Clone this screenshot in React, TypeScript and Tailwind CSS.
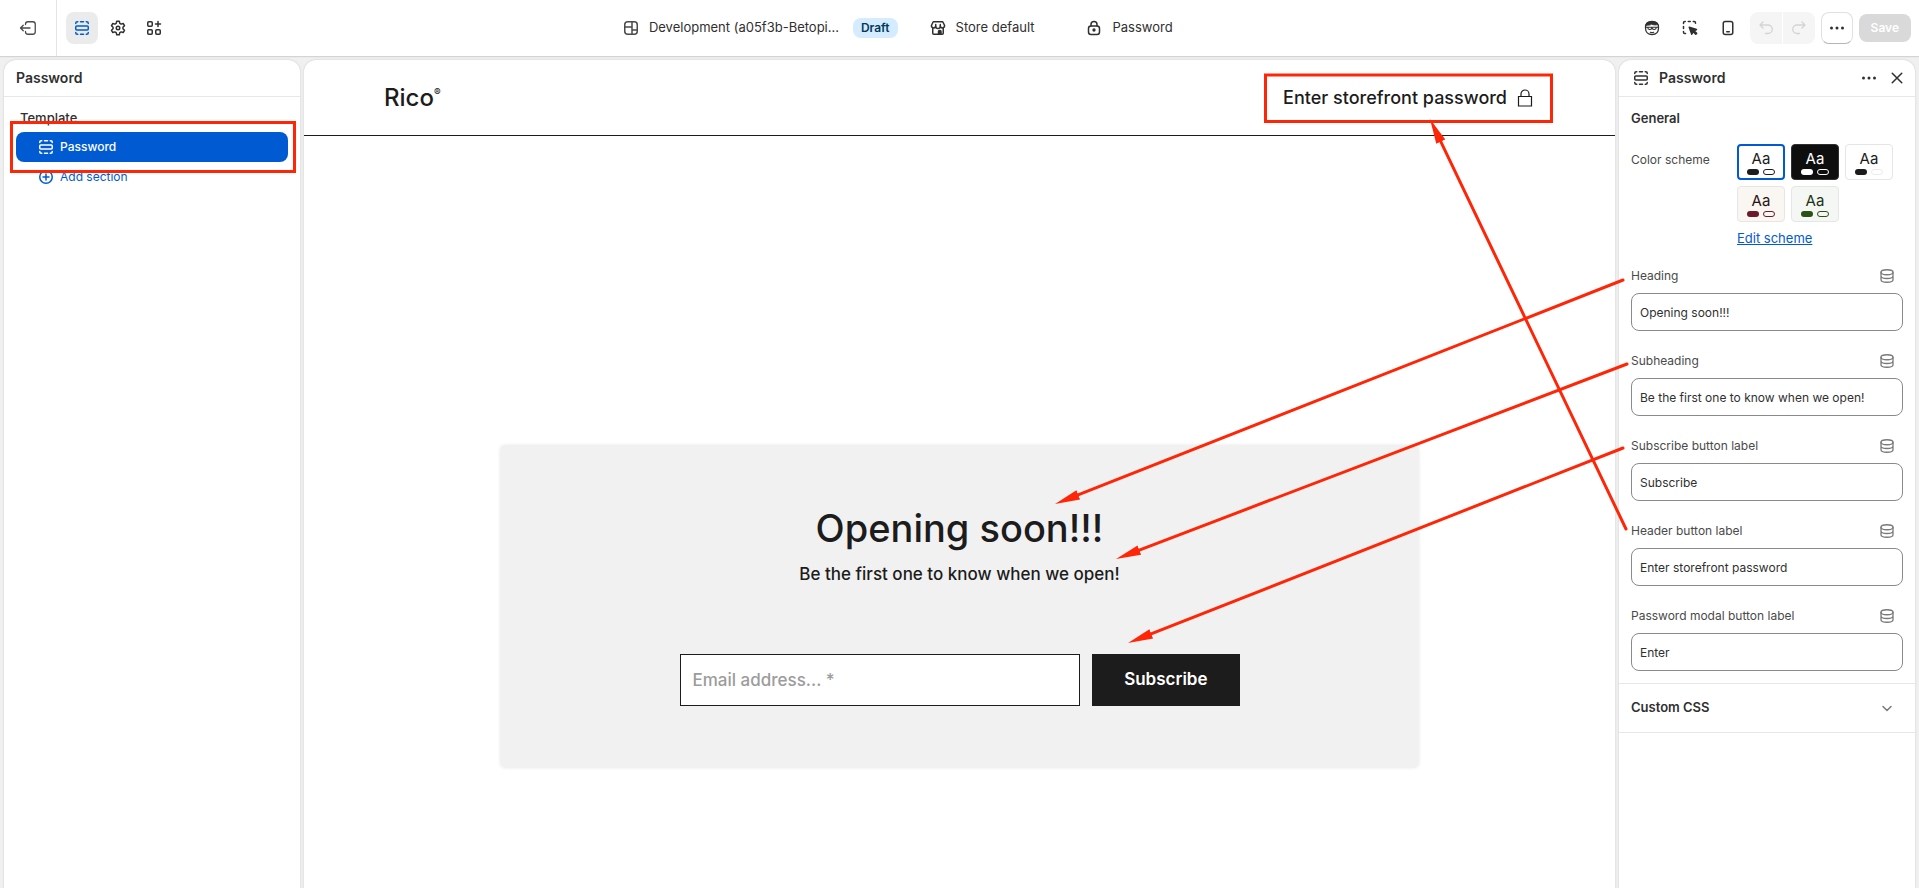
import { useState } from "react";
import type { ReactNode } from "react";

type IconProps = { children: ReactNode; className?: string };

function Icon({ children, className = "" }: IconProps) {
	return (
		<svg
			viewBox="0 0 20 20"
			fill="none"
			stroke="currentColor"
			strokeWidth="1.5"
			strokeLinecap="round"
			strokeLinejoin="round"
			aria-hidden="true"
			className={`size-5 shrink-0 ${className}`}
		>
			{children}
		</svg>
	);
}

const SectionIcon = () => (
	<Icon>
		<rect x="3.75" y="8" width="12.5" height="4" rx="1" />
		<path d="M3.75 5.5v-.25c0-.8.7-1.5 1.5-1.5h.5M8.5 3.75h3M14.25 3.75h.5c.8 0 1.5.7 1.5 1.5v.25M3.75 14.5v.25c0 .8.7 1.5 1.5 1.5h.5M8.5 16.25h3M14.25 16.25h.5c.8 0 1.5-.7 1.5-1.5v-.25" />
	</Icon>
);

const ExitIcon = () => (
	<Icon>
		<path d="M7.5 6.5v-.25a2.5 2.5 0 0 1 2.5-2.5h4.75a2.5 2.5 0 0 1 2.5 2.5v7.5a2.5 2.5 0 0 1-2.5 2.5H10a2.5 2.5 0 0 1-2.5-2.5v-.25M12 10H2.75M5.25 7.25 2.5 10l2.75 2.75" strokeWidth="1.3" />
	</Icon>
);

const GearIcon = () => (
	<Icon>
		<path d="M8.7 3.25h2.6l.5 2.1 1.3.75 2.050-.65 1.350 2.300-1.550 1.500v1.500l1.550 1.500-1.350 2.300-2.050-.65-1.300.75-.5 2.100H8.700l-.5-2.100-1.300-.75-2.050.65-1.350-2.300 1.550-1.500v-1.500L3.500 7.750l1.350-2.300 2.050.65 1.300-.75z" />
		<circle cx="10" cy="10" r="1.75" />
	</Icon>
);

const AppsIcon = () => (
	<Icon>
		<rect x="3.75" y="3.75" width="4.5" height="4.5" rx="1" />
		<rect x="3.75" y="11.75" width="4.5" height="4.5" rx="1" />
		<rect x="11.75" y="11.75" width="4.5" height="4.5" rx="1" />
		<path d="M14 3.5v5M11.5 6h5" />
	</Icon>
);

const ThemeIcon = () => (
	<Icon className="text-[#4a4a4a]">
		<rect x="3.75" y="3.75" width="12.5" height="12.5" rx="3" />
		<path d="M11 3.75v12.5M3.75 9H11M11 12h5.25" />
	</Icon>
);

const StoreIcon = () => (
	<Icon>
		<path d="M5.25 3.75h9.5l1.75 3.5a2.1 2.1 0 0 1-4.2 1 2.3 2.3 0 0 1-4.6 0 2.1 2.1 0 0 1-4.2-1zM4.75 10v5.25c0 .55.45 1 1 1h8.5c.55 0 1-.45 1-1V10" />
		<path d="M7.7 6.5v1.75M12.3 6.5v1.75" />
		<path d="M10.5 16v-2.5a1 1 0 0 1 1-1h.5a1 1 0 0 1 1 1V16z" fill="currentColor" />
	</Icon>
);

const LockIcon = () => (
	<Icon>
		<path d="M7 8V6.5a3 3 0 0 1 6 0V8" />
		<rect x="4.5" y="8" width="11" height="8.5" rx="2.5" />
		<circle cx="10" cy="12" r=".9" fill="currentColor" />
	</Icon>
);

const PersonaIcon = () => (
	<Icon>
		<path d="M3.5 10C3.2 5.5 5.5 3.500 10 3.500s6.800 2 6.500 6.500c0 4-2.500 6.500-6.500 6.500S3.500 14 3.500 10z" strokeWidth="1.300" />
		<path d="M3.750 7.250C4.300 4.800 6.500 3.750 10 3.750c3.200 0 5.200.9 6.100 2.750-2.200.7-4.500.6-6.600-.25-1.500.9-3.500 1.250-5.750 1z" fill="currentColor" strokeWidth=".8" />
		<path d="M3.500 9.250h13M5.750 9.500c0 2.600 3.250 2.600 4.250.5 1 2.100 4.250 2.100 4.250-.5M8.250 14.250c1.200.4 2.300.4 3.500 0" strokeWidth="1.100" />
	</Icon>
);

const InspectIcon = () => (
	<Icon>
		<path d="M3.500 5.500v-.75c0-.7.55-1.250 1.250-1.250h.5M8.250 3.500h2M13.250 3.500h1c.7 0 1.250.55 1.250 1.250v.5M3.500 8.500v2M3.500 13.500v.75c0 .7.55 1.250 1.250 1.250h.75" />
		<path d="M9.250 9.250l2.500 7 1.400-2.600 2.600 2.600.9-.9-2.600-2.600 2.450-1.250z" fill="currentColor" />
	</Icon>
);

const MobileIcon = () => (
	<Icon>
		<rect x="5.250" y="3.500" width="9.500" height="13" rx="2" />
		<path d="M8.750 13.750h2.500" />
	</Icon>
);

const UndoIcon = ({ flip = false }: { flip?: boolean }) => (
	<Icon className={flip ? "-scale-x-100" : ""}>
		<path d="M7 4 4 7l3 3M4.250 7H12a4.250 4.250 0 0 1 0 8.500H9.500" strokeWidth="1.300" />
	</Icon>
);

const DotsIcon = () => (
	<Icon>
		<g fill="currentColor" stroke="none">
			<circle cx="4.500" cy="10" r="1.500" />
			<circle cx="10" cy="10" r="1.500" />
			<circle cx="15.500" cy="10" r="1.500" />
		</g>
	</Icon>
);

const CloseIcon = () => (
	<Icon>
		<path d="M5.250 5.250l9.500 9.500M14.750 5.250l-9.500 9.500" />
	</Icon>
);

const DatabaseIcon = () => (
	<Icon>
		<ellipse cx="10" cy="6.250" rx="6" ry="2.500" strokeWidth="1.300" />
		<path d="M4 6.250v7.500c0 1.400 2.700 2.500 6 2.500s6-1.100 6-2.500v-7.500M4 10c0 1.400 2.700 2.500 6 2.500s6-1.100 6-2.500" strokeWidth="1.300" />
	</Icon>
);

const PlusCircleIcon = () => (
	<Icon>
		<circle cx="10" cy="10" r="6.250" />
		<path d="M10 7v6M7 10h6" />
	</Icon>
);

const ChevronIcon = () => (
	<Icon>
		<path d="M6 8.500l4 4 4-4" />
	</Icon>
);

function TopBar() {
	return (
		<header className="z-10 flex h-14 shrink-0 items-center bg-white shadow-[0_1px_1px_#d4d4d4]">
			<div className="flex h-full w-14 items-center justify-center">
				<button type="button" aria-label="Exit" className="text-[#4a4a4a]">
					<ExitIcon />
				</button>
			</div>
			<nav className="flex h-full items-center gap-1 border-l border-[#e3e3e3] pl-[9px]">
				<button type="button" aria-label="Sections" className="flex size-8 items-center justify-center rounded-lg bg-[#ebebeb] text-[#005bd3]">
					<SectionIcon />
				</button>
				<button type="button" aria-label="Theme settings" className="flex size-8 items-center justify-center">
					<GearIcon />
				</button>
				<button type="button" aria-label="App embeds" className="flex size-8 items-center justify-center">
					<AppsIcon />
				</button>
			</nav>

			<div className="flex flex-1 items-center justify-center pr-3 text-[13px]">
				<button type="button" className="flex items-center gap-2">
					<ThemeIcon />
					<span className="w-[196px] truncate text-left">Development (a05f3b-Betopi...</span>
					<span className="rounded-lg bg-[#d5ebff] px-2 text-xs leading-5 font-semibold text-[#003a5a]">Draft</span>
				</button>
				<button type="button" className="ml-[30px] flex items-center gap-2">
					<StoreIcon />
					Store default
				</button>
				<button type="button" className="ml-[50px] flex items-center gap-2">
					<LockIcon />
					Password
				</button>
			</div>

			<div className="flex items-center gap-1.5 pr-2">
				<button type="button" aria-label="Sidekick" className="flex size-8 items-center justify-center">
					<PersonaIcon />
				</button>
				<button type="button" aria-label="Inspector" className="flex size-8 items-center justify-center">
					<InspectIcon />
				</button>
				<button type="button" aria-label="Mobile view" className="flex size-8 items-center justify-center">
					<MobileIcon />
				</button>
				<div className="flex gap-px overflow-hidden rounded-lg text-[#d4d4d4]">
					<button type="button" disabled aria-label="Undo" className="flex size-8 items-center justify-center bg-[#f5f5f5]">
						<UndoIcon />
					</button>
					<button type="button" disabled aria-label="Redo" className="flex size-8 items-center justify-center bg-[#f5f5f5]">
						<UndoIcon flip />
					</button>
				</div>
				<button type="button" aria-label="More actions" className="flex size-8 items-center justify-center rounded-lg border border-[#e0e0e0] border-b-[#b5b5b5]">
					<DotsIcon />
				</button>
				<button type="button" disabled className="h-7 rounded-lg bg-[#d9d9d9] px-3 text-xs font-semibold text-white">
					Save
				</button>
			</div>
		</header>
	);
}

function Sidebar() {
	return (
		<aside className="w-74 shrink-0 rounded-t-xl bg-white shadow-[0_0_2px_#c4c4c4]">
			<h2 className="flex h-[37px] items-center border-b border-[#e7e7e7] px-3 text-sm font-semibold">Password</h2>
			<div className="px-3 pt-[11px]">
				<h3 className="px-1 pb-1 text-[13px] leading-5 font-medium">Template</h3>
				<button type="button" className="flex h-[30px] w-full items-center gap-1 rounded-lg bg-[#005bd3] pl-5 text-xs font-medium text-white">
					<SectionIcon />
					Password
				</button>
				<button type="button" className="flex h-[30px] w-full items-center gap-1 pl-5 text-xs text-[#005bd3]">
					<PlusCircleIcon />
					Add section
				</button>
			</div>
		</aside>
	);
}

function Preview() {
	return (
		<main className="min-w-0 flex-1 overflow-hidden rounded-t-xl bg-white text-[#1c1c1c] shadow-[0_0_2px_#c4c4c4]">
			<div className="flex h-19 items-center justify-between border-b border-[#1c1c1c] pr-20 pl-20">
				<a href="#" className="flex items-start text-2xl leading-7 font-medium">
					Rico
					<span className="text-[10px] leading-4">®</span>
				</a>
				<button type="button" className="flex items-center gap-2 text-lg font-medium">
					Enter storefront password
					<svg viewBox="0 0 20 20" fill="none" stroke="currentColor" strokeWidth="1.2" className="size-5" aria-hidden="true">
						<path d="M3.500 8.500h13v9.500h-13zM6 8.500V6a4 4 0 0 1 8 0v2.500" />
					</svg>
				</button>
			</div>

			<section className="mx-auto mt-[310px] flex w-[70%] flex-col items-center rounded-sm bg-[#f1f1f1] pt-14 pb-[61px] shadow-[0_0_4px_#dcdcdc]">
				<h1 className="text-[38px] leading-[52px] font-medium">Opening soon!!!</h1>
				<p className="mt-2 text-[17px] leading-6 font-medium">Be the first one to know when we open!</p>
				<form className="mt-17 flex w-[560px] max-w-full gap-3" onSubmit={(e) => e.preventDefault()}>
					<input
						type="email"
						aria-label="Email address"
						placeholder="Email address... *"
						className="h-[52px] min-w-0 flex-1 border border-[#1c1c1c] bg-white px-3 text-[17px] font-medium placeholder:text-[#9c9c9c]"
					/>
					<button type="submit" className="h-[52px] bg-[#1c1c1c] px-8 text-[17px] font-semibold text-white">
						Subscribe
					</button>
				</form>
			</section>
		</main>
	);
}

const schemes = [
	{ name: "Scheme 1", box: "border-2 border-[#005bd3] bg-white text-[#1c1c1c]", fill: "bg-[#1c1c1c]", line: "border-[#1c1c1c]" },
	{ name: "Scheme 2", box: "border border-[#303030] bg-[#0e0e0e] text-white", fill: "bg-white", line: "border-white" },
	{ name: "Scheme 3", box: "border border-[#e5e5e5] bg-white text-[#1c1c1c]", fill: "bg-[#1c1c1c]", line: "border-[#ececec]" },
	{ name: "Scheme 4", box: "border border-[#e8e5e2] bg-[#faf6f2] text-[#2b1216]", fill: "bg-[#6b1a2b]", line: "border-[#6b1a2b]" },
	{ name: "Scheme 5", box: "border border-[#e4e7e4] bg-[#f4f7f4] text-[#1d3216]", fill: "bg-[#2d5016]", line: "border-[#2d5016]" },
];

const fields = [
	{ id: "heading", label: "Heading", value: "Opening soon!!!" },
	{ id: "subheading", label: "Subheading", value: "Be the first one to know when we open!" },
	{ id: "subscribe", label: "Subscribe button label", value: "Subscribe" },
	{ id: "header-button", label: "Header button label", value: "Enter storefront password" },
	{ id: "modal-button", label: "Password modal button label", value: "Enter" },
];

function Settings() {
	const [values, setValues] = useState(fields.map((f) => f.value));

	return (
		<aside className="mr-1 w-74 shrink-0 rounded-t-xl bg-white shadow-[0_0_2px_#c4c4c4]">
			<div className="flex h-[37px] items-center border-b border-[#e7e7e7] pr-2 pl-3">
				<SectionIcon />
				<h2 className="ml-2 flex-1 text-sm font-semibold">Password</h2>
				<button type="button" aria-label="More" className="mr-2">
					<DotsIcon />
				</button>
				<button type="button" aria-label="Close">
					<CloseIcon />
				</button>
			</div>

			<div className="px-3 pt-[11px] pb-3">
				<h3 className="text-[13px] leading-5 font-semibold">General</h3>
				<div className="mt-4 flex">
					<span className="w-[106px] shrink-0 pt-1.5 text-xs leading-5 text-[#4a4a4a]">Color scheme</span>
					<div>
						<div className="flex flex-wrap gap-1.5">
							{schemes.map((s) => (
								<button key={s.name} type="button" aria-label={s.name} className={`flex h-9 w-12 flex-col items-center justify-center rounded ${s.box}`}>
									<span className="text-[15px] leading-5">Aa</span>
									<span className="flex gap-1">
										<span className={`h-1.5 w-3 rounded-full ${s.fill}`} />
										<span className={`h-1.5 w-3 rounded-full border ${s.line}`} />
									</span>
								</button>
							))}
						</div>
						<a href="#" className="mt-1.5 inline-block text-[13px] leading-5 text-[#005bd3] underline">
							Edit scheme
						</a>
					</div>
				</div>

				<div className="mt-[17px] flex flex-col gap-5">
					{fields.map((f, i) => (
						<div key={f.id}>
							<div className="flex items-center justify-between pr-1.5 pb-[7px]">
								<label htmlFor={f.id} className="text-xs leading-5 text-[#4a4a4a]">
									{f.label}
								</label>
								<span className="text-[#7a7a7a]">
									<DatabaseIcon />
								</span>
							</div>
							<input
								id={f.id}
								type="text"
								value={values[i]}
								onChange={(e) => setValues(values.map((v, j) => (j === i ? e.target.value : v)))}
								className="block h-[38px] w-full rounded-lg border border-[#8a8a8a] px-2 text-xs"
							/>
						</div>
					))}
				</div>
			</div>

			<button type="button" className="flex h-[50px] w-full items-center justify-between border-y border-[#e7e7e7] pr-[18px] pl-3 text-[13px] font-semibold">
				Custom CSS
				<span className="text-[#7a7a7a]">
					<ChevronIcon />
				</span>
			</button>
		</aside>
	);
}

const arrows = [
	{ from: [1623, 280], to: [1055, 504] },
	{ from: [1627, 364], to: [1116, 559] },
	{ from: [1623, 448], to: [1128, 643] },
	{ from: [1626, 529], to: [1430, 119] },
];

// Red callouts drawn over the whole editor
function Annotations() {
	return (
		<svg className="pointer-events-none absolute inset-0 z-20 h-full w-full" aria-hidden="true">
			<defs>
				<marker id="head" markerUnits="userSpaceOnUse" markerWidth="26" markerHeight="12" refX="25" refY="6" orient="auto">
					<path d="M0 1 25 6 0 11z" fill="#ff2608" />
				</marker>
			</defs>
			<g fill="none" stroke="#ff2608" strokeWidth="3">
				<rect x="11.5" y="122.5" width="283" height="49" />
				<rect x="1265.5" y="75" width="286" height="46.500" />
			</g>
			{arrows.map(({ from, to }) => {
				const len = Math.hypot(to[0] - from[0], to[1] - from[1]);
				const k = 20 / len;
				return (
					<g key={from[1]}>
						<line
							x1={from[0]}
							y1={from[1]}
							x2={to[0] - (to[0] - from[0]) * k}
							y2={to[1] - (to[1] - from[1]) * k}
							stroke="#ff2608"
							strokeWidth="3"
							strokeLinecap="round"
						/>
						<line x1={from[0]} y1={from[1]} x2={to[0]} y2={to[1]} stroke="none" markerEnd="url(#head)" />
					</g>
				);
			})}
		</svg>
	);
}

export default function App() {
	return (
		<div className="relative flex h-screen flex-col overflow-hidden bg-[#f0f0f0] font-[Inter,sans-serif] text-[#303030]">
			<TopBar />
			<div className="flex min-h-0 flex-1 gap-1 pt-1 pl-1">
				<Sidebar />
				<Preview />
				<Settings />
			</div>
			<Annotations />
		</div>
	);
}
